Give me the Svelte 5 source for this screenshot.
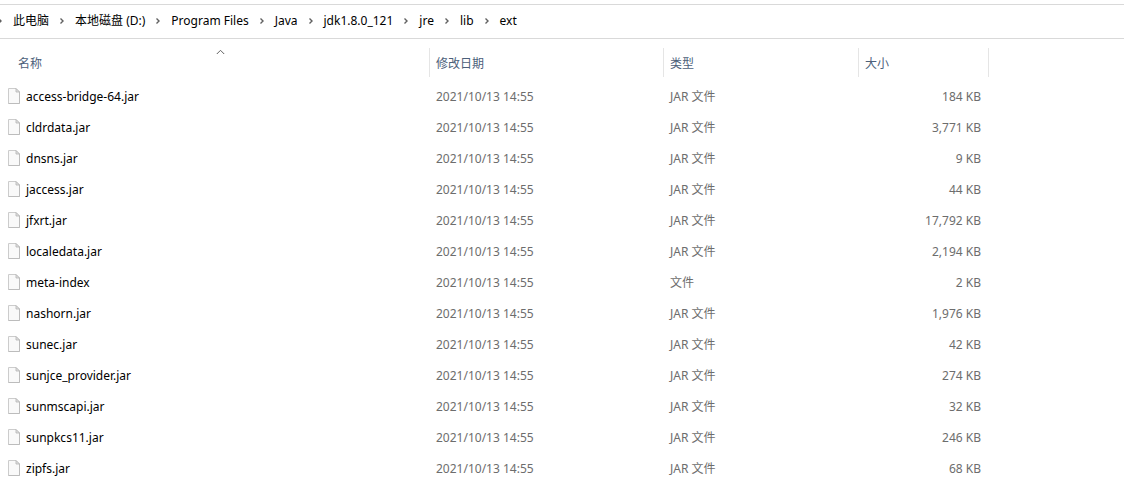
<script>
  const path = ['此电脑', '本地磁盘 (D:)', 'Program Files', 'Java', 'jdk1.8.0_121', 'jre', 'lib', 'ext'];

  const columns = [
    { key: 'name', label: '名称' },
    { key: 'date', label: '修改日期' },
    { key: 'type', label: '类型' },
    { key: 'size', label: '大小' }
  ];

  const date = '2021/10/13 14:55';
  const files = [
    { name: 'access-bridge-64.jar', type: 'JAR 文件', size: '184 KB' },
    { name: 'cldrdata.jar', type: 'JAR 文件', size: '3,771 KB' },
    { name: 'dnsns.jar', type: 'JAR 文件', size: '9 KB' },
    { name: 'jaccess.jar', type: 'JAR 文件', size: '44 KB' },
    { name: 'jfxrt.jar', type: 'JAR 文件', size: '17,792 KB' },
    { name: 'localedata.jar', type: 'JAR 文件', size: '2,194 KB' },
    { name: 'meta-index', type: '文件', size: '2 KB' },
    { name: 'nashorn.jar', type: 'JAR 文件', size: '1,976 KB' },
    { name: 'sunec.jar', type: 'JAR 文件', size: '42 KB' },
    { name: 'sunjce_provider.jar', type: 'JAR 文件', size: '274 KB' },
    { name: 'sunmscapi.jar', type: 'JAR 文件', size: '32 KB' },
    { name: 'sunpkcs11.jar', type: 'JAR 文件', size: '246 KB' },
    { name: 'zipfs.jar', type: 'JAR 文件', size: '68 KB' }
  ];
</script>

<div class="explorer">
  <nav class="address">
    <ol>
      {#each path as part}
        <li>
          <svg class="chevron" width="6" height="8" viewBox="0 0 6 8" aria-hidden="true">
            <path d="M1.5 1.5 L4 4 L1.5 6.5" fill="none" stroke="#606060" stroke-width="1.4" />
          </svg>
          <button type="button">{part}</button>
        </li>
      {/each}
    </ol>
  </nav>

  <main>
    <table>
      <colgroup>
        <col class="name-col" />
        <col class="date-col" />
        <col class="type-col" />
        <col class="size-col" />
        <col />
      </colgroup>
      <thead>
        <tr>
          {#each columns as column}
            <th scope="col" aria-sort={column.key === 'name' ? 'ascending' : undefined}>
              <button type="button" class={column.key}>{column.label}</button>
              {#if column.key === 'name'}
                <svg class="sort" width="9" height="6" viewBox="0 0 9 6" aria-hidden="true">
                  <path d="M0.8 5 L4.5 1.3 L8.2 5" fill="none" stroke="#606060" stroke-width="1" />
                </svg>
              {/if}
            </th>
          {/each}
          <td></td>
        </tr>
      </thead>
      <tbody>
        {#each files as file}
          <tr>
            <td class="file">
              <div>
                <svg width="12" height="16" viewBox="0 0 12 16" aria-hidden="true">
                  <path d="M0.5 0.5 H8 L11.5 4 V15.5 H0.5 Z" fill="#f9f9f9" stroke="#cccccc" />
                  <path d="M11.5 4 V15.5 H0.5" fill="none" stroke="#bcbcbc" />
                  <path d="M8 0.5 V4 H11.5 Z" fill="#e2e2e2" stroke="#b4b4b4" stroke-width="0.8" />
                </svg>
                <span>{file.name}</span>
              </div>
            </td>
            <td>{date}</td>
            <td>{file.type}</td>
            <td class="amount">{file.size}</td>
            <td></td>
          </tr>
        {/each}
      </tbody>
    </table>
  </main>
</div>

<style>
  :global(body) {
    background: #fff;
  }

  .explorer {
    padding-top: 4px;
    overflow: hidden;
    font-family: 'Noto Sans', 'Noto Sans CJK SC', sans-serif;
    font-size: 12px;
    line-height: 18px;
    color: #000;
  }

  button {
    margin: 0;
    padding: 0;
    border: 0;
    background: none;
    font: inherit;
    color: inherit;
    white-space: nowrap;
  }

  .address {
    border: solid #d9d9d9;
    border-width: 1px 0;
  }

  ol {
    display: flex;
    height: 32px;
    margin: 0 0 0 -3px;
    padding: 0 0 1px;
    list-style: none;
  }

  li {
    display: flex;
    align-items: center;
  }

  .chevron {
    flex: none;
    margin-right: 10px;
  }

  li + li .chevron {
    margin-left: 10px;
  }

  main {
    padding-top: 9px;
  }

  table {
    width: 100%;
    table-layout: fixed;
    border-spacing: 0;
  }

  .name-col {
    width: 430px;
  }

  .date-col {
    width: 234px;
  }

  .type-col {
    width: 195px;
  }

  .size-col {
    width: 130px;
  }

  th {
    position: relative;
    padding: 0 0 4px;
    font-weight: 400;
    color: #4c607a;
  }

  th button {
    display: block;
    width: 100%;
    height: 29px;
    padding: 2px 6px 0;
    border-right: 1px solid #e5e5e5;
    text-align: left;
  }

  th .name {
    padding-left: 18px;
  }

  .sort {
    position: absolute;
    top: 1px;
    left: calc(50% + 1px);
    display: block;
  }

  td {
    height: 31px;
    padding: 0 6px;
    color: #6d6d6d;
    white-space: nowrap;
  }

  thead td {
    height: auto;
  }

  .file {
    padding-left: 8px;
    color: #000;
  }

  .file div {
    display: flex;
    align-items: center;
    gap: 6px;
  }

  .file svg {
    margin-bottom: 2px;
  }

  .amount {
    padding-right: 8px;
    text-align: right;
  }
</style>
